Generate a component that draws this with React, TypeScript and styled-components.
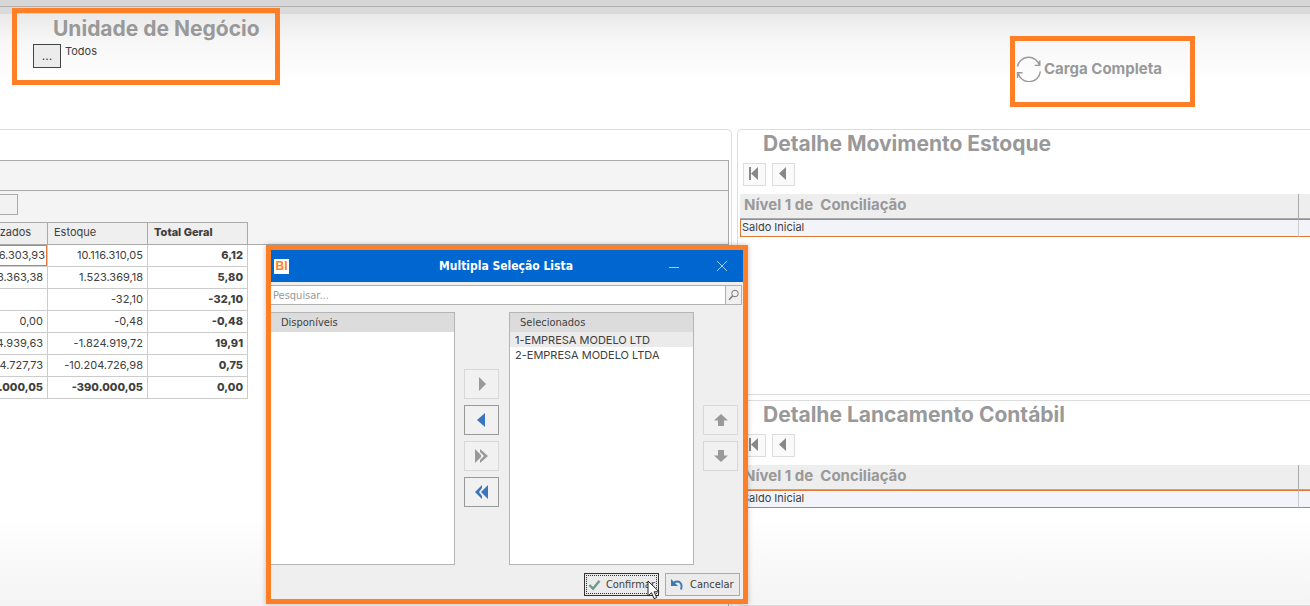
import React from "react";
import styled, { createGlobalStyle, css } from "styled-components";

const GlobalStyle = createGlobalStyle`
  *, *::before, *::after { box-sizing: border-box; }
  html, body, #root { height: 100%; }
  body {
    margin: 0;
    overflow: hidden;
    background: #fff;
    color: #404040;
    font-family: Inter, "Liberation Sans", sans-serif;
    font-size: 11px;
  }
  button, input { font: inherit; color: inherit; margin: 0; }
`;

const orange = "#ff7f27";
const uiFont = `"DejaVu Sans Condensed", "DejaVu Sans", sans-serif`;

const Page = styled.main`
  position: relative;
  display: flex;
  flex-direction: column;
  height: 100%;
  background: linear-gradient(#e9e9e9 14px, #f7f7f7 42px, #fff 84px, #fff calc(100% - 90px), #f4f4f4 100%);
`;

const TopStrip = styled.div`
  height: 14px;
  flex: none;
  background: #dadada;
  &::before {
    content: "";
    display: block;
    height: 7px;
    background: #d7d7d7;
    border-bottom: 1px solid #b0b0b0;
  }
`;

const Header = styled.header`
  display: flex;
  justify-content: space-between;
  align-items: flex-start;
  height: 121px;
  flex: none;
  margin-top: -6px;
  padding: 0 115px 0 12px;
`;

const Highlight = styled.section`
  border: 5px solid ${orange};
`;

const UnitBox = styled(Highlight)`
  width: 268px;
  height: 77px;
  padding: 4px 16px;
`;

const LoadBox = styled(Highlight)`
  display: flex;
  align-items: flex-start;
  width: 185px;
  height: 71px;
  margin-top: 28px;
  padding: 15px 1px;
`;

const Title = styled.h2`
  margin: 0;
  padding-left: 20px;
  font-size: 21px;
  line-height: 24px;
  font-weight: 700;
  color: #999;
  white-space: nowrap;
`;

const UnitRow = styled.div`
  display: flex;
  gap: 4px;
  padding-top: 3px;
  line-height: 14px;
`;

const EllipsisButton = styled.button`
  width: 28px;
  height: 24px;
  padding: 0;
  border: 1px solid #444;
  background: #ececec;
  font-size: 12px;
`;

const LoadButton = styled.button`
  display: flex;
  align-items: center;
  gap: 2px;
  padding: 0;
  border: 0;
  background: none;
  color: #999;
  font-size: 15px;
  line-height: 26px;
  font-weight: 700;
  white-space: nowrap;
`;

const Workspace = styled.div`
  display: grid;
  grid-template-columns: 732fr 573fr;
  column-gap: 5px;
  flex: 1;
  min-height: 0;
`;

const PivotPanel = styled.section`
  min-width: 0;
  overflow: hidden;
  padding: 30px 2px 0 0;
  border: 1px solid #ddd;
  border-width: 1px 1px 0 0;
  border-radius: 0 5px 0 0;
`;

const Pivot = styled.div`
  height: 100%;
  border: 1px solid #aaa;
  border-width: 1px 1px 0 0;
`;

const FilterArea = styled.div`
  height: 30px;
  background: #f4f4f4;
  border-bottom: 1px solid #aaa;
`;

const FieldArea = styled.div`
  height: 54px;
  padding-top: 3px;
  background: #f4f4f4;
  border-bottom: 1px solid #aaa;
`;

const FieldButton = styled.button`
  display: block;
  width: 18px;
  height: 21px;
  padding: 0;
  border: 1px solid #aaa;
  border-left: 0;
  background: #f2f2f2;
`;

const PivotTable = styled.table`
  width: 301px;
  margin: -23px 0 0 -53px;
  table-layout: fixed;
  border-collapse: collapse;
  background: #fff;
`;

const PivotHead = styled.th<{ $strong?: boolean }>`
  height: 22px;
  padding: 0 6px 3px;
  border: 1px solid #aaa;
  background: #efefef;
  text-align: left;
  white-space: nowrap;
  font-weight: ${(p) => (p.$strong ? 800 : 400)};
`;

const PivotCell = styled.td<{ $strong?: boolean; $focus?: boolean }>`
  height: 22px;
  padding: 0 4px 2px;
  border: 1px solid #ccc;
  text-align: right;
  white-space: nowrap;
  font-weight: ${(p) => (p.$strong ? 800 : 400)};
  ${(p) =>
    p.$focus &&
    css`
      padding-right: 2px;
      box-shadow: inset 0 0 0 1px #e0793a;
    `}
`;

const Details = styled.div`
  display: grid;
  grid-template-rows: 266px 1fr;
  row-gap: 5px;
  min-width: 0;
  min-height: 0;
`;

const DetailPanel = styled.section`
  min-width: 0;
  padding: 2px 0 0 2px;
  border: 1px solid #ddd;
  border-right: 0;
  border-radius: 5px 0 0 5px;
`;

const DetailTitle = styled(Title)`
  padding-left: 23px;
`;

const NavRow = styled.div`
  display: flex;
  gap: 6px;
  padding: 7px 3px 8px;
`;

const NavButton = styled.button`
  display: grid;
  place-items: center;
  width: 23px;
  height: 23px;
  padding: 0 0 2px;
  border: 1px solid #ddd;
  background: #fafafa;
`;

const DetailTable = styled.table`
  width: 100%;
  table-layout: fixed;
  border-collapse: separate;
  border-spacing: 0;
`;

const DetailHead = styled.th`
  height: 25px;
  padding: 0 4px 2px;
  background: #eee;
  border-bottom: 1px solid #aaa;
  color: #999;
  font-size: 15px;
  line-height: 18px;
  text-align: left;
  white-space: pre;
  & + & { width: 12px; border-left: 1px solid #aaa; }
`;

const DetailCell = styled.td`
  height: 18px;
  padding: 0 1px 2px;
  border: 1px solid #df7a35;
  border-right: 0;
  background: #f2f4f9;
  line-height: 14px;
  & + & { border-left-color: #ccc; }
`;

const Dialog = styled.section`
  position: absolute;
  left: 266px;
  top: 245px;
  width: 482px;
  border: 5px solid ${orange};
  background: #efefef;
  box-shadow: 0 0 5px rgba(0, 0, 0, 0.25);
  font-family: ${uiFont};
`;

const TitleBar = styled.header`
  display: grid;
  grid-template-columns: 80px 1fr 82px;
  align-items: center;
  height: 32px;
  background: #0067d1;
  color: #fff;
`;

const BiLogo = styled.span`
  width: 15px;
  height: 15px;
  margin-left: 3px;
  background: #fff;
  color: ${orange};
  font: 700 12px/15px "Liberation Sans", sans-serif;
  text-align: center;
`;

const DialogTitle = styled.h1`
  margin: 0;
  font-size: 12px;
  line-height: 16px;
  text-align: center;
`;

const WindowButtons = styled.div`
  display: flex;
  justify-content: flex-end;
  gap: 34px;
  padding-right: 15px;
`;

const WindowButton = styled.button`
  display: flex;
  padding: 0;
  border: 0;
  background: none;
  color: #a9ceef;
`;

const SearchRow = styled.form`
  display: flex;
  padding: 3px 1px 7px 0;
`;

const SearchInput = styled.input`
  flex: 1;
  min-width: 0;
  height: 20px;
  padding: 0 2px;
  border: 1px solid #b0b0b0;
  border-left: 0;
  border-radius: 0;
  background: #fff;
  &::placeholder { color: #999; opacity: 1; }
`;

const SearchButton = styled.button`
  display: grid;
  place-items: center;
  width: 16px;
  height: 20px;
  padding: 0;
  border: 1px solid #b0b0b0;
  border-left: 0;
  background: #f0f0f0;
`;

const Picker = styled.div`
  display: grid;
  grid-template-columns: 184fr 36px 185fr 35px;
  column-gap: 9px;
  padding-right: 5px;
`;

const ListBox = styled.div`
  height: 253px;
  border: 1px solid #b5b5b5;
  background: #fff;
  &:first-child { border-left: 0; }
`;

const ListHeader = styled.h3`
  margin: 0;
  padding: 0 10px;
  height: 19px;
  background: #dcdcdc;
  font-size: 11px;
  line-height: 19px;
  font-weight: 400;
`;

const List = styled.ul`
  margin: 0;
  padding: 0;
  list-style: none;
  font-family: Inter, sans-serif;
`;

const ListItem = styled.li<{ $active?: boolean }>`
  height: 15px;
  padding: 0 5px;
  line-height: 16px;
  white-space: nowrap;
  background: ${(p) => (p.$active ? "#ebebeb" : "transparent")};
`;

const MoveColumn = styled.div<{ $offset: number }>`
  display: flex;
  flex-direction: column;
  gap: 6px;
  padding-top: ${(p) => p.$offset}px;
`;

const MoveButton = styled.button`
  display: grid;
  place-items: center;
  width: 35px;
  height: 30px;
  padding: 0;
  border: 1px solid #999;
  background: #f1f1f1;
  color: #3a76bd;
  &:disabled { border-color: #d8d8d8; color: #999; }
`;

const Footer = styled.footer`
  position: relative;
  display: flex;
  justify-content: flex-end;
  gap: 6px;
  padding: 8px 3px 3px;
`;

const ActionButton = styled.button<{ $focused?: boolean }>`
  display: flex;
  align-items: center;
  gap: 5px;
  width: 75px;
  height: 23px;
  padding: 0 3px;
  border: 1px solid ${(p) => (p.$focused ? "#333" : "#aaa")};
  outline: ${(p) => (p.$focused ? "1px dotted #333" : "none")};
  outline-offset: -3px;
  background: #ebebeb;
  white-space: nowrap;
`;

const Pointer = styled.svg`
  position: absolute;
  right: 82px;
  top: 15px;
`;

const rows: { cells: string[]; total?: boolean }[] = [
  { cells: ["-10.116.303,93", "10.116.310,05", "6,12"] },
  { cells: ["-1.523.363,38", "1.523.369,18", "5,80"] },
  { cells: ["", "-32,10", "-32,10"] },
  { cells: ["0,00", "-0,48", "-0,48"] },
  { cells: ["1.824.939,63", "-1.824.919,72", "19,91"] },
  { cells: ["10.204.727,73", "-10.204.726,98", "0,75"] },
  { cells: ["390.000,05", "-390.000,05", "0,00"], total: true },
];

function Shape({ d }: { d: string }) {
  return (
    <svg width="16" height="16" viewBox="0 0 16 16" fill="currentColor" aria-hidden="true">
      <path d={d} />
    </svg>
  );
}

function SyncIcon() {
  return (
    <svg width="26" height="26" viewBox="0 0 26 26" fill="none" stroke="#999" strokeWidth="1.4" aria-hidden="true">
      <path d="M1.500 10.500A11.400 11.400 0 0 1 23.600 9.400M18.800 9.400h5V4.600M24.400 15.400A11.400 11.400 0 0 1 2 17M1.500 22v-5.200h5" />
    </svg>
  );
}

function Detail({ title }: { title: string }) {
  return (
    <DetailPanel>
      <DetailTitle>{title}</DetailTitle>
      <NavRow>
        <NavButton aria-label="Primeiro">
          <svg width="15" height="15" viewBox="0 0 15 15" fill="#888" aria-hidden="true">
            <path d="M2 1h2v13H2zM11 1v13L4 7.500z" />
          </svg>
        </NavButton>
        <NavButton aria-label="Anterior">
          <svg width="15" height="15" viewBox="0 0 15 15" fill="#888" aria-hidden="true">
            <path d="M10 1v13L3 7.500z" />
          </svg>
        </NavButton>
      </NavRow>
      <DetailTable>
        <thead>
          <tr>
            <DetailHead>{"Nível 1 de  Conciliação"}</DetailHead>
            <DetailHead />
          </tr>
        </thead>
        <tbody>
          <tr>
            <DetailCell>Saldo Inicial</DetailCell>
            <DetailCell />
          </tr>
        </tbody>
      </DetailTable>
    </DetailPanel>
  );
}

function SelectionDialog() {
  return (
    <Dialog role="dialog" aria-labelledby="dialog-title">
      <TitleBar>
        <BiLogo>BI</BiLogo>
        <DialogTitle id="dialog-title">Multipla Seleção Lista</DialogTitle>
        <WindowButtons>
          <WindowButton aria-label="Minimizar">
            <svg width="16" height="12" viewBox="0 0 16 12" stroke="currentColor" aria-hidden="true">
              <path d="M3 7.500h10" />
            </svg>
          </WindowButton>
          <WindowButton aria-label="Fechar">
            <svg width="12" height="12" viewBox="0 0 12 12" stroke="currentColor" aria-hidden="true">
              <path d="M1 1l10 10M11 1L1 11" />
            </svg>
          </WindowButton>
        </WindowButtons>
      </TitleBar>
      <SearchRow onSubmit={(e) => e.preventDefault()}>
        <SearchInput aria-label="Pesquisar" placeholder="Pesquisar..." />
        <SearchButton aria-label="Buscar">
          <svg width="12" height="12" viewBox="0 0 12 12" fill="none" stroke="#777" aria-hidden="true">
            <circle cx="7" cy="4.500" r="3.300" />
            <path d="M4.600 7L1 10.700" strokeWidth="1.500" />
          </svg>
        </SearchButton>
      </SearchRow>
      <Picker>
        <ListBox>
          <ListHeader>Disponíveis</ListHeader>
        </ListBox>
        <MoveColumn $offset={57}>
          <MoveButton disabled aria-label="Adicionar"><Shape d="M5 1v14l7-7z" /></MoveButton>
          <MoveButton aria-label="Remover"><Shape d="M11 1v14L3 8z" /></MoveButton>
          <MoveButton disabled aria-label="Adicionar todos"><Shape d="M1 1v14l6-6v-2zM6 1l8 7-8 7v-3l4-4-4-4z" /></MoveButton>
          <MoveButton aria-label="Remover todos"><Shape d="M14 1v14L7 8zM8 1v3L5 8l3 4v3L1 8z" /></MoveButton>
        </MoveColumn>
        <ListBox>
          <ListHeader>Selecionados</ListHeader>
          <List>
            <ListItem $active>1-EMPRESA MODELO LTD</ListItem>
            <ListItem>2-EMPRESA MODELO LTDA</ListItem>
          </List>
        </ListBox>
        <MoveColumn $offset={93}>
          <MoveButton disabled aria-label="Subir"><Shape d="M8 2l7 6.500h-4V14H5V8.500H1z" /></MoveButton>
          <MoveButton disabled aria-label="Descer"><Shape d="M8 14l7-6.500h-4V2H5v5.500H1z" /></MoveButton>
        </MoveColumn>
      </Picker>
      <Footer>
        <ActionButton $focused>
          <svg width="14" height="14" viewBox="0 0 14 14" fill="none" stroke="#6b9c8b" strokeWidth="2.600" aria-hidden="true">
            <path d="M1.500 7l4 4L12.500 2.500" />
          </svg>
          Confirmar
        </ActionButton>
        <ActionButton>
          <svg width="16" height="14" viewBox="0 0 16 14" fill="none" aria-hidden="true">
            <path d="M2 1v7h7z" fill="#3f78b5" />
            <path d="M5 4.500c5-2.500 9 .5 7 7" stroke="#3f78b5" strokeWidth="2" />
          </svg>
          Cancelar
        </ActionButton>
        <Pointer width="14" height="20" viewBox="0 0 14 20" aria-hidden="true">
          <path d="M1 1v15l3.500-3.300 2.600 6 2.600-1.200-2.600-5.700h5z" fill="#fff" stroke="#222" />
        </Pointer>
      </Footer>
    </Dialog>
  );
}

export default function App() {
  return (
    <>
      <GlobalStyle />
      <Page>
        <TopStrip />
        <Header>
          <UnitBox>
            <Title>Unidade de Negócio</Title>
            <UnitRow>
              <EllipsisButton aria-label="Escolher unidade">...</EllipsisButton>
              <span>Todos</span>
            </UnitRow>
          </UnitBox>
          <LoadBox>
            <LoadButton>
              <SyncIcon />
              Carga Completa
            </LoadButton>
          </LoadBox>
        </Header>
        <Workspace>
          <PivotPanel>
            <Pivot>
              <FilterArea />
              <FieldArea>
                <FieldButton aria-label="Campo" />
              </FieldArea>
              <PivotTable>
                <thead>
                  <tr>
                    <PivotHead>Contabilizados</PivotHead>
                    <PivotHead>Estoque</PivotHead>
                    <PivotHead $strong>Total Geral</PivotHead>
                  </tr>
                </thead>
                <tbody>
                  {rows.map((row, r) => (
                    <tr key={r}>
                      {row.cells.map((cell, c) => (
                        <PivotCell key={c} $strong={row.total || c === 2} $focus={r === 0 && c === 0}>
                          {cell}
                        </PivotCell>
                      ))}
                    </tr>
                  ))}
                </tbody>
              </PivotTable>
            </Pivot>
          </PivotPanel>
          <Details>
            <Detail title="Detalhe Movimento Estoque" />
            <Detail title="Detalhe Lancamento Contábil" />
          </Details>
        </Workspace>
        <SelectionDialog />
      </Page>
    </>
  );
}
